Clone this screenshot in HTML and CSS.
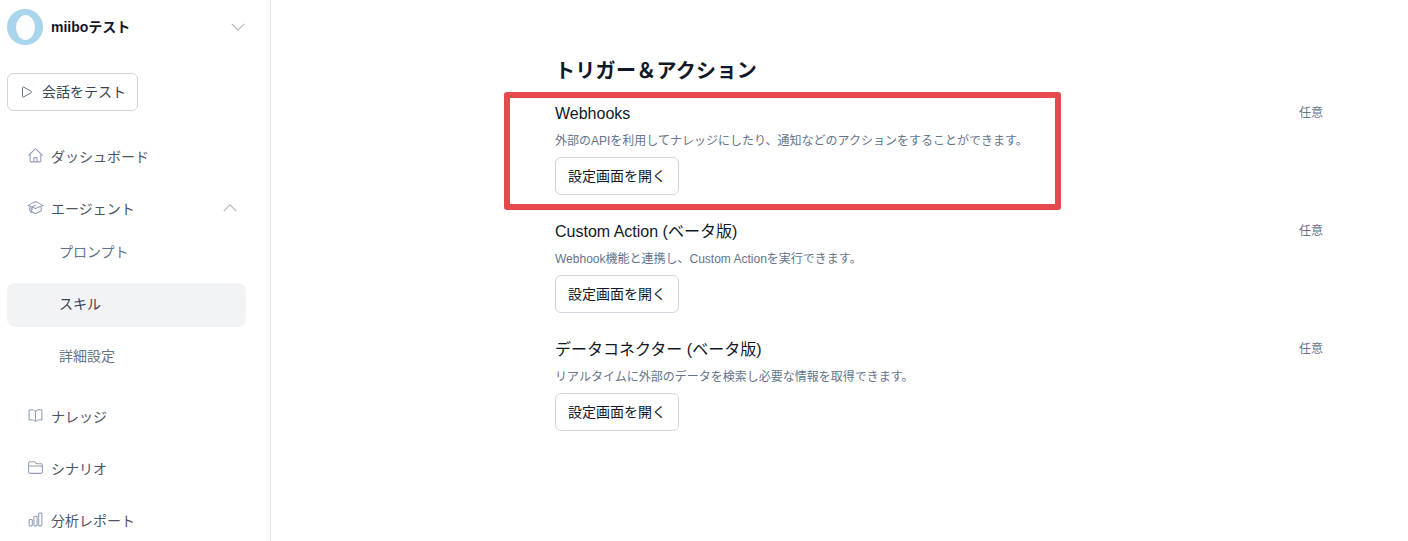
FILE: index.html
```html
<!DOCTYPE html>
<html lang="ja">
<head>
    <meta charset="utf-8">
    <title>miibo - スキル</title>
    <link rel="stylesheet" href="styles.css">
</head>
<body>

<div class="layout">
    <!-- Sidebar -->
    <aside class="sidebar">
        <div class="agent-head">
            <svg class="agent-logo" viewBox="0 0 36 36"><circle cx="18" cy="18" r="18" fill="#a8d5eb"/><ellipse cx="18.500" cy="18.500" rx="9.500" ry="12.500" fill="#fbfdfe"/></svg>
            <span class="agent-name">miiboテスト</span>
            <svg class="chevron head-chevron" viewBox="0 0 24 24"><path d="M19.5 8.25l-7.5 7.5-7.5-7.5"/></svg>
        </div>

        <button class="test-btn">
            <svg class="test-icon" viewBox="0 0 24 24"><path d="M5.25 5.653c0-.856.917-1.398 1.667-.986l11.54 6.348a1.125 1.125 0 010 1.971l-11.54 6.347a1.125 1.125 0 01-1.667-.985V5.653z"/></svg>
            <span class="btn-label">会話をテスト</span>
        </button>

        <nav class="nav">
            <a class="nav-item">
                <svg class="nav-icon" viewBox="0 0 24 24"><path d="M2.25 12l8.954-8.955c.44-.439 1.152-.439 1.591 0L21.75 12M4.5 9.75v10.125c0 .621.504 1.125 1.125 1.125H9.75v-4.875c0-.621.504-1.125 1.125-1.125h2.25c.621 0 1.125.504 1.125 1.125V21h4.125c.621 0 1.125-.504 1.125-1.125V9.75M8.25 21h8.25"/></svg>
                <span class="nav-label">ダッシュボード</span>
            </a>
            <a class="nav-item">
                <svg class="nav-icon" viewBox="0 0 24 24"><path d="M4.26 10.147a60.436 60.436 0 00-.491 6.347A48.627 48.627 0 0112 20.904a48.627 48.627 0 018.232-4.41 60.46 60.46 0 00-.491-6.347m-15.482 0a50.57 50.57 0 00-2.658-.813A59.905 59.905 0 0112 3.493a59.902 59.902 0 0110.399 5.84c-.896.248-1.783.52-2.658.814m-15.482 0A50.697 50.697 0 0112 13.489a50.702 50.702 0 017.74-3.342M6.75 15a.75.75 0 100-1.5.75.75 0 000 1.5zm0 0v-3.675A55.378 55.378 0 0112 8.443m-7.007 11.55A5.981 5.981 0 006.75 15.75v-1.5"/></svg>
                <span class="nav-label">エージェント</span>
                <svg class="chevron nav-chevron" viewBox="0 0 24 24"><path d="M4.5 15.75l7.5-7.5 7.5 7.5"/></svg>
            </a>
            <div class="sub-list">
                <a class="sub-item">プロンプト</a>
                <a class="sub-item active">スキル</a>
                <a class="sub-item">詳細設定</a>
            </div>
            <a class="nav-item">
                <svg class="nav-icon" viewBox="0 0 24 24"><path d="M12 6.042A8.967 8.967 0 006 3.75c-1.052 0-2.062.18-3 .512v14.25A8.987 8.987 0 016 18c2.305 0 4.408.867 6 2.292m0-14.25a8.966 8.966 0 016-2.292c1.052 0 2.062.18 3 .512v14.25A8.987 8.987 0 0018 18a8.967 8.967 0 00-6 2.292m0-14.25v14.25"/></svg>
                <span class="nav-label">ナレッジ</span>
            </a>
            <a class="nav-item">
                <svg class="nav-icon" viewBox="0 0 24 24"><path d="M2.25 12.75V12A2.25 2.25 0 014.5 9.75h15A2.25 2.25 0 0121.75 12v.75m-8.69-6.44l-2.12-2.12a1.5 1.5 0 00-1.061-.44H4.5A2.25 2.25 0 002.25 6v12a2.25 2.25 0 002.25 2.25h15A2.25 2.25 0 0021.75 18V9a2.25 2.25 0 00-2.25-2.25h-5.379a1.5 1.5 0 01-1.06-.44z"/></svg>
                <span class="nav-label">シナリオ</span>
            </a>
            <a class="nav-item">
                <svg class="nav-icon" viewBox="0 0 24 24"><path d="M3 13.125C3 12.504 3.504 12 4.125 12h2.25c.621 0 1.125.504 1.125 1.125v6.75C7.5 20.496 6.996 21 6.375 21h-2.25A1.125 1.125 0 013 19.875v-6.75zM9.75 8.625c0-.621.504-1.125 1.125-1.125h2.25c.621 0 1.125.504 1.125 1.125v11.25c0 .621-.504 1.125-1.125 1.125h-2.25a1.125 1.125 0 01-1.125-1.125V8.625zM16.500 4.125c0-.621.504-1.125 1.125-1.125h2.25C20.496 3 21 3.504 21 4.125v15.750c0 .621-.504 1.125-1.125 1.125h-2.25a1.125 1.125 0 01-1.125-1.125V4.125z"/></svg>
                <span class="nav-label">分析レポート</span>
            </a>
        </nav>
    </aside>

    <!-- Main content -->
    <main class="main">
        <h2 class="section-title">トリガー＆アクション</h2>

        <div class="setting-row">
            <div class="setting-body">
                <h3 class="setting-name">Webhooks</h3>
                <p class="setting-desc">外部のAPIを利用してナレッジにしたり、通知などのアクションをすることができます。</p>
                <button class="open-btn">設定画面を開く</button>
            </div>
            <span class="setting-tag">任意</span>
            <div class="highlight"></div>
        </div>

        <div class="setting-row">
            <div class="setting-body">
                <h3 class="setting-name">Custom Action (ベータ版)</h3>
                <p class="setting-desc">Webhook機能と連携し、Custom Actionを実行できます。</p>
                <button class="open-btn">設定画面を開く</button>
            </div>
            <span class="setting-tag">任意</span>
        </div>

        <div class="setting-row">
            <div class="setting-body">
                <h3 class="setting-name">データコネクター (ベータ版)</h3>
                <p class="setting-desc">リアルタイムに外部のデータを検索し必要な情報を取得できます。</p>
                <button class="open-btn">設定画面を開く</button>
            </div>
            <span class="setting-tag">任意</span>
        </div>
    </main>
</div>

</body>
</html>
```

FILE: styles.css
```css
/* Reset and General Styles */
* {
    margin: 0;
    padding: 0;
    box-sizing: border-box;
}

html, body {
    height: 100%;
    overflow: hidden;
}

body {
    background: #fff;
    color: #111827;
    font-family: "Liberation Sans", "Noto Sans CJK JP", sans-serif;
}

button {
    font-family: inherit;
    background: #fff;
    cursor: pointer;
}

.layout {
    display: flex;
    height: 541px;
}

/* Sidebar */
.sidebar {
    width: 271px;
    flex-shrink: 0;
    height: 541px;
    overflow: hidden;
    border-right: 1px solid #e5e7eb;
    padding: 9px 24px 0 7px;
}

.agent-head {
    display: flex;
    align-items: center;
    height: 36px;
}

.agent-logo {
    width: 36px;
    height: 36px;
}

.agent-name {
    margin-left: 8px;
    margin-bottom: 2px;
    font-size: 14px;
    font-weight: 700;
    color: #111827;
}

.chevron {
    fill: none;
    stroke: #b4bac5;
    stroke-width: 1.500;
    width: 20px;
    height: 20px;
}

.head-chevron {
    margin-left: auto;
    margin-right: -2px;
}

.test-btn {
    display: flex;
    align-items: center;
    gap: 7px;
    width: 131px;
    height: 38px;
    margin-top: 28px;
    padding-left: 11px;
    border: 1px solid #d1d5db;
    border-radius: 6px;
    font-size: 14px;
    color: #374151;
}

.btn-label {
    margin-bottom: 2px;
}

.test-icon {
    width: 16px;
    height: 16px;
    fill: none;
    stroke: #6b7280;
    stroke-width: 1.500;
}

.nav {
    display: flex;
    flex-direction: column;
    margin-top: 19px;
}

.nav-item {
    display: flex;
    align-items: center;
    height: 52px;
    padding-left: 20px;
    font-size: 14px;
    color: #4b5563;
}

.nav-label {
    margin-bottom: 1px;
}

.nav-icon {
    width: 17px;
    height: 17px;
    margin-right: 7px;
    margin-bottom: 1px;
    fill: none;
    stroke: #93a0b6;
    stroke-width: 1.500;
}

.nav-chevron {
    margin-left: auto;
    margin-right: 6px;
}

.sub-list {
    display: flex;
    flex-direction: column;
    gap: 8px;
    margin-top: -3px;
    margin-bottom: 11px;
}

.sub-item {
    display: flex;
    align-items: center;
    height: 44px;
    padding-left: 52px;
    padding-bottom: 4px;
    border-radius: 8px;
    font-size: 14px;
    color: #64748b;
}

.sub-item.active {
    background: #f2f3f5;
    color: #374151;
}

/* Main content */
.main {
    flex: 1;
    padding: 57px 85px 0 284px;
}

.section-title {
    font-size: 20px;
    line-height: 28px;
    font-weight: 700;
    letter-spacing: 0.3px;
    color: #111827;
    margin-bottom: 6px;
}

.setting-row {
    position: relative;
    display: flex;
    justify-content: space-between;
    align-items: flex-start;
    height: 118px;
    padding-top: 11px;
}

.setting-name {
    font-size: 16px;
    line-height: 24px;
    font-weight: 400;
    color: #111827;
}

.setting-desc {
    margin-top: 7px;
    font-size: 12px;
    line-height: 16px;
    color: #64748b;
}

.open-btn {
    display: block;
    width: 124px;
    height: 38px;
    margin-top: 8px;
    padding-bottom: 2px;
    border: 1px solid #d1d5db;
    border-radius: 6px;
    font-size: 14px;
    color: #111827;
}

.setting-tag {
    margin-top: 1px;
    font-size: 12px;
    line-height: 20px;
    color: #64748b;
}

/* Red annotation box over the first row */
.highlight {
    position: absolute;
    left: -51px;
    top: 1px;
    width: 557px;
    height: 118px;
    border: 6px solid #e5484d;
    border-radius: 3px;
}
```
